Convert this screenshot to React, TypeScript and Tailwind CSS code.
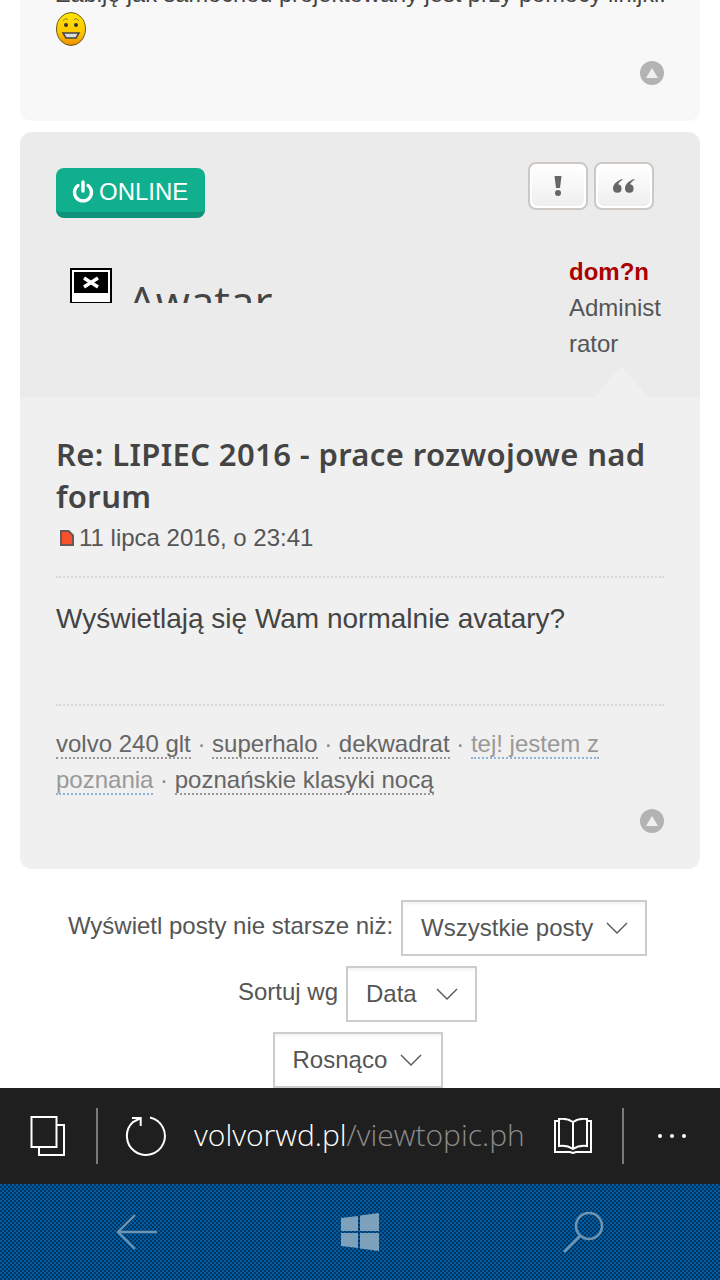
import React from 'react';

const UpButton = () => (
  <div className="flex justify-end pr-9">
    <div className="flex h-6 w-6 items-center justify-center rounded-full bg-[#b3b3b3]">
      <svg width="14" height="12" viewBox="0 0 14 12">
        <path d="M7 1 L13 11 H1 Z" fill="#f0f0f0" />
      </svg>
    </div>
  </div>
);

const Smiley = () => (
  <svg width="30" height="34" viewBox="0 0 30 34" className="block">
    <defs>
      <linearGradient id="smile" x1="0" y1="0" x2="0" y2="1">
        <stop offset="0" stopColor="#ffe600" />
        <stop offset="0.6" stopColor="#fdc800" />
        <stop offset="1" stopColor="#f08c00" />
      </linearGradient>
    </defs>
    <ellipse cx="15" cy="17" rx="14.5" ry="16.5" fill="url(#smile)" stroke="#6b5a20" strokeWidth="1" />
    <path d="M7 9 Q10 5 12 8 M18 8 Q20 5 23 9" stroke="#8a7a30" strokeWidth="1" fill="none" />
    <circle cx="10" cy="13" r="2" fill="#333" />
    <circle cx="20" cy="13" r="2" fill="#333" />
    <path d="M7 21 H23 L20 26 H10 Z" fill="#ddd" stroke="#444" strokeWidth="1.5" />
  </svg>
);

const Tag = ({ children, guest }: { children: React.ReactNode; guest?: boolean }) => (
  <span
    className={
      guest
        ? 'border-b-2 border-dotted border-[#8fb2d6] text-[#999999]'
        : 'border-b-2 border-dotted border-[#999999] text-[#666666]'
    }
  >
    {children}
  </span>
);

const Select = ({ label, className }: { label: string; className: string }) => (
  <div
    className={`flex h-14 items-center border-2 border-[#cccccc] bg-white pl-[18px] text-[24px] text-[#555555] shadow-[inset_0_4px_4px_-3px_rgba(0,0,0,0.08)] ${className}`}
  >
    {label}
    <svg width="24" height="14" viewBox="0 0 24 14">
      <path d="M2 2 L12 12 L22 2" fill="none" stroke="#555555" strokeWidth="1.4" />
    </svg>
  </div>
);

const ActionButton = ({ children }: { children: React.ReactNode }) => (
  <div className="h-12 w-[60px] rounded-lg border-2 border-[#cdc8c3] bg-white p-[2px]">
    <div className="flex h-full items-center justify-center rounded-md bg-gradient-to-b from-[#ffffff] to-[#eeeeee]">
      {children}
    </div>
  </div>
);

export default function App() {
  return (
    <div className="relative flex h-[1280px] w-[720px] flex-col overflow-hidden bg-white font-['Liberation_Sans',sans-serif]">
      <div className="flex-1 overflow-hidden px-5">
        {/* previous post, scrolled off the top */}
        <div className="-mt-[28px] h-[149px] rounded-b-xl bg-[#f8f8f8] pt-1">
          <p className="whitespace-nowrap pl-9 text-[23.6px] leading-9 text-[#444444]">Zabiję jak samochód projektowany jest przy pomocy linijki.</p>
          <div className="pl-9">
            <Smiley />
          </div>
          <div className="mt-[15px]">
            <UpButton />
          </div>
        </div>

        {/* post */}
        <div className="mt-[11px] h-[737px] overflow-hidden rounded-xl bg-[#f0f0f0]">
          <div className="relative flex h-[266px] justify-between bg-[#ebebeb] pl-9 pr-[36px]">
            <div>
              <div className="mt-9 flex h-[50px] w-[149px] items-center gap-[5px] rounded-lg border-b-[6px] border-[#0e9279] bg-[#10af8e] pl-4 pt-[3px] text-[24px] text-white">
                <svg width="22" height="24" viewBox="0 0 22 24" fill="none" stroke="#ffffff" strokeWidth="3.4" strokeLinecap="round">
                  <path d="M11 2 V11" />
                  <path d="M6 5.5 A8.5 8.5 0 1 0 16 5.5" />
                </svg>
                ONLINE
              </div>
              <div className="mt-[50px] flex h-[35px] items-start overflow-hidden pl-[14px]">
                <div className="mr-4 h-9 w-[42px] shrink-0 border-2 border-black bg-white p-[2px]">
                  <div className="flex h-[21px] items-center justify-center bg-black">
                    <svg width="18" height="13" viewBox="0 0 18 13" stroke="#ffffff" strokeWidth="3.4">
                      <path d="M2 2 L16 11 M16 2 L2 11" />
                    </svg>
                  </div>
                </div>
                <span className="mt-[4px] font-['Open_Sans',sans-serif] text-[44px] leading-[58px] text-[#444444]">Awatar</span>
              </div>
            </div>
            <div className="flex w-[95px] flex-col">
              <div className="-ml-[41px] mt-[30px] flex gap-[6px]">
                <ActionButton>
                  <svg width="8" height="20" viewBox="0 0 8 20" fill="#666666">
                    <path d="M0.5 0 H7.5 L6 12 H2 Z" />
                    <circle cx="4" cy="17" r="3" />
                  </svg>
                </ActionButton>
                <ActionButton>
                  <svg width="22" height="14" viewBox="0 0 22 14" fill="#666666">
                    <path d="M9 0 C4 2 0 5 0 9.5 A4.3 4.3 0 1 0 5 5.2 C6 3.5 7.5 2 9.5 1 Z" />
                    <path d="M21 0 C16 2 12 5 12 9.5 A4.3 4.3 0 1 0 17 5.2 C18 3.5 19.5 2 21.5 1 Z" />
                  </svg>
                </ActionButton>
              </div>
              <div className="mt-[44px] text-[24px] leading-9 text-[#555555]">
                <div className="font-bold text-[#aa0000]">dom?n</div>
                <div>Administ<br />rator</div>
              </div>
            </div>
            <div className="absolute right-[51px] bottom-0 h-[32px] w-[55px] bg-[#f0f0f0] [clip-path:polygon(50%_0,100%_100%,0_100%)]" />
          </div>

          <div className="px-9 pt-[35px]">
            <h2 className="font-['Noto_Sans',sans-serif] text-[31px] font-semibold leading-[42px] tracking-[0.37px] text-[#444444]">Re: LIPIEC 2016 - prace rozwojowe nad forum</h2>
            <div className="mt-[3px] flex h-9 items-center text-[24px] text-[#555555]">
              <svg width="16" height="18" viewBox="0 0 16 18" className="ml-[3px] mr-[4px]">
                <path d="M1 1 H10 L15 6 V17 H1 Z" fill="#6a5a55" />
                <path d="M3 3 H9 L13 7 V15 H3 Z" fill="#f4512c" />
              </svg>
              11 lipca 2016, o 23:41
            </div>
            <div className="mt-[20px] border-t-2 border-dotted border-[#d8d8d8]" />
            <p className="mt-[23px] h-[103px] text-[28px] leading-9 text-[#444444]">Wyświetlają się Wam normalnie avatary?</p>
            <div className="border-t-2 border-dotted border-[#d8d8d8]" />
            <p className="mt-[20px] text-[24px] leading-9 text-[#888888]">
              <Tag>volvo 240 glt</Tag> · <Tag>superhalo</Tag> · <Tag>dekwadrat</Tag> · <Tag guest>tej! jestem z poznania</Tag> · <Tag>poznańskie klasyki nocą</Tag>
            </p>
          </div>
          <div className="mt-[11px]">
            <UpButton />
          </div>
        </div>

        {/* sort form */}
        <div className="mt-[31px] flex flex-col items-center gap-[10px] pr-[5px] text-[24px] text-[#555555]">
          <div className="flex items-center gap-2">
            <span className="pb-1">Wyświetl posty nie starsze niż:</span>
            <Select label="Wszystkie posty" className="w-[246px] gap-3" />
          </div>
          <div className="flex items-center gap-2">
            <span className="pb-1">Sortuj wg</span>
            <Select label="Data" className="w-[131px] gap-[18px]" />
          </div>
          <Select label="Rosnąco" className="w-[170px] gap-3" />
        </div>
      </div>

      {/* browser toolbar */}
      <div className="flex h-24 shrink-0 items-center bg-[#1f1f1f] pl-[30px] font-['Open_Sans',sans-serif] text-white">
        <svg width="36" height="40" viewBox="0 0 36 40" fill="none" stroke="#ffffff" strokeWidth="2">
          <rect x="1.5" y="1" width="25" height="30" />
          <path d="M27 9 H34 V39 H9 V31" />
        </svg>
        <div className="ml-[30px] h-14 w-0.5 bg-[#7a7a7a]" />
        <svg width="42" height="42" viewBox="0 0 42 42" fill="none" stroke="#ffffff" strokeWidth="2" className="ml-[27px]">
          <path d="M25 2.4 A19 19 0 1 1 8 7 L15.7 3 M7 3 H15.7 V11" />
        </svg>
        <div className="ml-[27px] w-[358px] overflow-hidden whitespace-nowrap pb-1 text-[30px] font-light">
          volvorwd.pl<span className="text-[#8c8c8c]">/viewtopic.ph</span>
        </div>
        <svg width="38" height="36" viewBox="0 0 38 36" fill="none" stroke="#ffffff" strokeWidth="2" className="ml-[2px]">
          <path d="M5 3 H1 V34 H16 L19 35 L22 34 H37 V3 H33" />
          <path d="M19 31 V4 Q13 0 5 1 V28 Q13 27 19 31 Q25 27 33 28 V1 Q25 0 19 4" />
        </svg>
        <div className="ml-[30px] h-14 w-0.5 bg-[#7a7a7a]" />
        <div className="ml-[34px] flex gap-2">
          <span className="h-1 w-1 rounded-full bg-white" />
          <span className="h-1 w-1 rounded-full bg-white" />
          <span className="h-1 w-1 rounded-full bg-white" />
        </div>
      </div>

      {/* windows nav bar */}
      <div className="flex h-24 shrink-0 items-center justify-between bg-[#004a85] bg-[repeating-conic-gradient(#01345f_0_25%,#005ca3_0_50%)] bg-[length:4px_4px] pl-[116px] pr-[116px]">
        <svg width="42" height="38" viewBox="0 0 42 38" fill="none" stroke="#6d93b2" strokeWidth="2.4">
          <path d="M41 19 H2 M19 2 L2 19 L19 36" />
        </svg>
        <svg width="40" height="38" viewBox="0 0 40 38" fill="#7ea1bb">
          <path d="M1 5 L18 3 V18 H1 Z M20 2.5 L39 0 V18 H20 Z M1 20 H18 V35 L1 33 Z M20 20 H39 V38 L20 35.5 Z" />
        </svg>
        <svg width="42" height="42" viewBox="0 0 42 42" fill="none" stroke="#6d93b2" strokeWidth="2.6">
          <circle cx="27" cy="15" r="13" />
          <path d="M18 25 L2 41" />
        </svg>
      </div>
    </div>
  );
}
